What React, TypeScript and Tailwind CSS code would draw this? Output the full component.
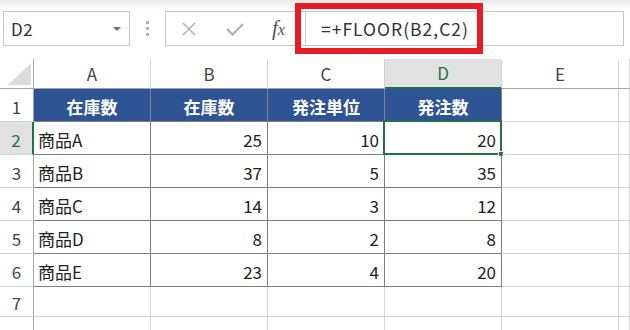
import React from "react";

const F = { fontFamily: '"Noto Sans CJK JP", "Noto Sans", sans-serif' };

const cols = ["A", "B", "C", "D", "E", ""];
const data: (string | number)[][] = [
  ["商品A", 25, 10, 20],
  ["商品B", 37, 5, 35],
  ["商品C", 14, 3, 12],
  ["商品D", 8, 2, 8],
  ["商品E", 23, 4, 20],
];
const heads = ["在庫数", "在庫数", "発注単位", "発注数"];

export default function App() {
  const rowH = ["h-[33px]", "h-[33px]", "h-[33px]", "h-[33px]", "h-[33px]", "h-[33px]", "h-[30px]", "h-[33px]"];
  return (
    <div className="w-[630px] h-[330px] overflow-hidden bg-white text-[#222]" style={F}>
      {/* formula bar */}
      <div className="h-[59px] flex items-start bg-[linear-gradient(#e9e9e9,#ffffff_10px)]">
        <div className="mt-[11px] ml-[3px] w-[127px] h-[35px] border border-[#c6c6c6] bg-white flex items-center justify-between pl-[7px] pr-[8px]">
          <span className="text-[17px] text-[#333] leading-none tracking-[0.5px]">D2</span>
          <span className="w-0 h-0 border-l-[4px] border-r-[4px] border-t-[4px] border-l-transparent border-r-transparent border-t-[#6e6e6e]" />
        </div>
        <div className="mt-[21px] ml-[16px] flex flex-col gap-[3px]">
          <span className="w-[3px] h-[3px] bg-[#b4b4b4]" />
          <span className="w-[3px] h-[3px] bg-[#b4b4b4]" />
          <span className="w-[3px] h-[3px] bg-[#b4b4b4]" />
        </div>
        <div className="relative mt-[11px] ml-[16px] w-[459px] h-[35px] border border-[#c6c6c6] bg-white flex items-center">
          <div className="w-[140px] h-full flex items-center border-r border-[#d0d0d0]">
            <svg width="14" height="14" viewBox="0 0 14 14" className="ml-[16px]">
              <path d="M1 1 L13 13 M13 1 L1 13" stroke="#b3b3b3" strokeWidth="1.6" />
            </svg>
            <svg width="18" height="14" viewBox="0 0 18 14" className="ml-[30px]">
              <path d="M1 7 L6.5 12.5 L17 2" stroke="#b3b3b3" strokeWidth="2.4" fill="none" />
            </svg>
            <span
              className="ml-[28px] text-[21px] italic text-[#555] leading-none"
              style={{ fontFamily: '"Liberation Serif", "DejaVu Serif", serif' }}
            >
              f<span className="text-[16px]">x</span>
            </span>
          </div>
          <span className="ml-[15px] text-[17.5px] text-[#333] leading-none tracking-[1px]">=+FLOOR(B2,C2)</span>
          <div className="absolute left-[129px] top-[-9px] w-[188px] h-[51px] border-[6px] border-[#e81c24]" />
        </div>
      </div>

      {/* sheet */}
      <div className="grid grid-cols-[34px_117px_117px_117px_117px_117px_1fr]">
        <div className="h-[30px] border-r border-b border-[#a6a6a6] relative">
          <svg className="absolute left-[8px] top-[4px]" width="23" height="22" viewBox="0 0 23 22">
            <path d="M23 0 L23 22 L0 22 Z" fill="#dcdcdc" />
          </svg>
        </div>
        {cols.map((c, i) => (
          <div
            key={c + i}
            className={
              c === "D"
                ? "h-[30px] bg-[#e1e1e1] border-r border-r-[#d4d4d4] border-b-2 border-b-[#217346] flex items-center justify-center text-[17px] text-[#217346]"
                : "h-[30px] border-r border-r-[#d4d4d4] border-b border-b-[#a6a6a6] flex items-center justify-center text-[17px] text-[#444]"
            }
          >
            {c}
          </div>
        ))}

        {rowH.map((h, r) => {
          const rowNo = r + 1;
          const isSelRow = rowNo === 2;
          const cells = [];
          cells.push(
            <div
              key={"h" + r}
              className={
                isSelRow
                  ? `${h} bg-[#e1e1e1] border-r-2 border-r-[#217346] border-b border-b-[#d4d4d4] flex items-center justify-center pt-[3px] text-[17px] text-[#217346]`
                  : `${h} border-r border-r-[#a6a6a6] border-b border-b-[#d4d4d4] flex items-center justify-center pt-[3px] text-[17px] text-[#444]`
              }
            >
              {rowNo}
            </div>
          );
          for (let c = 0; c < 6; c++) {
            const inTable = rowNo <= 6 && c <= 3;
            let content: React.ReactNode = null;
            let cls = `${h} relative flex items-center pt-[3px] text-[17px] border-r border-b `;
            cls += inTable ? "border-r-[#7f7f7f] border-b-[#7f7f7f] " : "border-r-[#d4d4d4] border-b-[#d4d4d4] ";
            if (rowNo === 1 && c <= 3) {
              cls += "bg-[#2f5496] text-white font-bold justify-center ";
              content = heads[c];
            } else if (rowNo >= 2 && rowNo <= 6 && c <= 3) {
              const v = data[rowNo - 2][c];
              cls += c === 0 ? "justify-start pl-[4px] " : "justify-end pr-[5px] ";
              content = v;
            }
            cells.push(
              <div key={r + "-" + c} className={cls}>
                {content}
                {rowNo === 2 && c === 3 && (
                  <div className="absolute top-[-2px] left-[-2px] right-[-1px] bottom-[-1px] border-2 border-[#217346]">
                    <div className="absolute right-[-4px] bottom-[-4px] w-[6px] h-[6px] bg-[#217346] border border-white" />
                  </div>
                )}
              </div>
            );
          }
          return cells;
        })}
      </div>
    </div>
  );
}
